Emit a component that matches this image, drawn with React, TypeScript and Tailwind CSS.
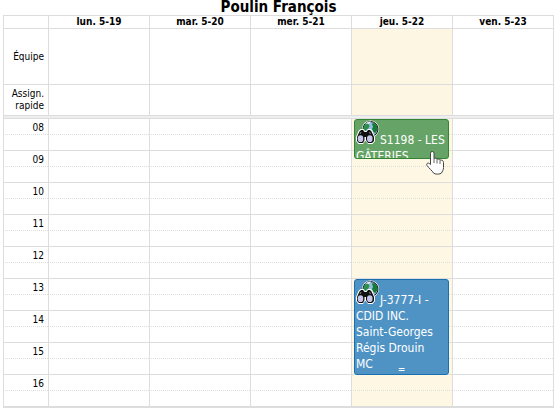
const days = ['lun. 5-19', 'mar. 5-20', 'mer. 5-21', 'jeu. 5-22', 'ven. 5-23']
const hours = ['08', '09', '10', '11', '12', '13', '14', '15', '16']
const today = 3

type CalendarEvent = {
  day: number
  hour: string
  lines: string[]
  className: string
  resizable?: boolean
}

const events: CalendarEvent[] = [
  {
    day: 3,
    hour: '08',
    lines: ['S1198 - LES', 'GÂTERIES'],
    className: 'h-10 border-[#338533] bg-[#66a366]',
  },
  {
    day: 3,
    hour: '13',
    lines: ['J-3777-I -', 'CDID INC.', 'Saint-Georges', 'Régis Drouin', 'MC'],
    className: 'h-24 border-[#1a6fb0] bg-[#4f93c5]',
    resizable: true,
  },
]

function LocateIcon() {
  return (
    <svg viewBox="0 0 24 24" className="inline-block h-6 w-6 align-baseline" aria-hidden="true">
      <circle cx="14.500" cy="9" r="8.500" fill="#fff" />
      <circle cx="14.500" cy="9" r="7.500" fill="#8fbbdc" stroke="#111" strokeWidth="1" />
      <path d="M9 4c2-2 4-2.500 6-2.500l-2 2.500-3 1z" fill="#dcebf4" />
      <path d="M7.500 8c.3-2 1.500-3.500 3-4.500l2 .5 1 2-1.500 3-2 1-1 2z" fill="#2c8f4a" />
      <path d="M16 3.500l2.500-.5 2.500 3 .5 3.500-2 3.500-2-1-1.500-3 1-2z" fill="#157a33" />
      <path d="M13 13l3-1 2 2-2 2h-2z" fill="#2c6ea6" />
      <path d="M2.500 11l2-2h3L9 11h1.500L12 9h3l1.500 2L19 17v4l-2.500 3h-4.500l-2-3h-1l-2 3H2.500L0 21v-4z" fill="#fff" />
      <path d="M3.500 11.500l1.500-1.500h2l1.500 2h2l1.500-2h2l1.500 1.500L18 17v4l-2 2h-4l-2-3v-3H8.500v3L7 23H3l-2-2v-4z" fill="#111" />
      <ellipse cx="4.500" cy="18.700" rx="2.800" ry="3.400" fill="#c6c6ea" />
      <ellipse cx="13.800" cy="18.700" rx="2.800" ry="3.400" fill="#c6c6ea" />
      <path d="M5 12l-1 2M13.500 12l1 2" stroke="#888" fill="none" />
    </svg>
  )
}

function HandCursor() {
  return (
    <svg viewBox="0 0 18 24" className="pointer-events-none absolute top-8 right-2 z-20 h-6 w-[18px]" aria-hidden="true">
      <path
        d="M4.500 2.200a1.500 1.500 0 0 1 3.500 0V7.500c1.300-.7 2.500-.3 2.900.7 1.200-.5 2.500-.1 2.900.9 1.800-.4 3.700.3 3.700 2.400v5c0 3-1.500 4-2 5.500-1 1.500-7 1.500-8 0-1.500-2.500-4.300-4.500-6.500-7.500-1-2 1-3.500 3.500-1z"
        fill="#fff"
        stroke="#444"
      />
      <path d="M8 7.500v4.500M11 8.500v4M14 9.500v3.500" stroke="#666" fill="none" />
    </svg>
  )
}

function EventBox({ event }: { event: CalendarEvent }) {
  return (
    <a
      href="#"
      className={`absolute top-0 right-[3px] left-[2px] z-10 overflow-hidden rounded-[3px] border pl-px text-xs leading-4 text-white ${event.className}`}
    >
      {event.lines.map((line, i) => (
        <div key={line} className="whitespace-nowrap">
          {i === 0 ? <LocateIcon /> : null}
          {line}
        </div>
      ))}
      {event.resizable ? (
        <span className="absolute bottom-0 left-1/2 w-2 -translate-x-1/2 text-center text-[10px] leading-2">=</span>
      ) : null}
    </a>
  )
}

export default function App() {
  return (
    <main className="pr-1 pl-[3px] font-['DejaVu_Sans_Condensed','DejaVu_Sans',sans-serif] text-[10px] text-black">
      <h1 className="h-[15px] text-center text-[15px] leading-[15px] font-bold">Poulin François</h1>

      <table className="w-full table-fixed border-separate border-spacing-0 border-r border-[#ddd]">
        <colgroup>
          <col className="w-[45px]" />
          {days.map((day) => (
            <col key={day} />
          ))}
        </colgroup>
        <thead>
          <tr className="h-[13px]">
            <td className="border-t border-l border-[#ddd] p-0" />
            {days.map((day) => (
              <th key={day} className="border-t border-l border-[#ddd] p-0 leading-3 font-bold">
                {day}
              </th>
            ))}
          </tr>
        </thead>
        <tbody>
          <tr className="h-14">
            <th className="border-t border-l border-[#ddd] py-0 pr-1 pl-0 text-right leading-3 font-normal">Équipe</th>
            {days.map((day, i) => (
              <td key={day} className={`border-t border-l border-[#ddd] p-0 ${i === today ? 'bg-[#fdf6e3]' : ''}`} />
            ))}
          </tr>
          <tr className="h-[31px]">
            <th className="border-t border-l border-[#ddd] py-0 pr-1 pl-0 text-right leading-3 font-normal">
              Assign. rapide
            </th>
            {days.map((day, i) => (
              <td key={day} className={`border-t border-l border-[#ddd] p-0 ${i === today ? 'bg-[#fdf6e3]' : ''}`} />
            ))}
          </tr>
        </tbody>
      </table>

      <div className="h-[3px] border border-b-0 border-[#ddd] bg-[#eee]" />

      <table className="w-full table-fixed border-separate border-spacing-0 border-r border-b-2 border-[#ddd]">
        <colgroup>
          <col className="w-[45px]" />
          {days.map((day) => (
            <col key={day} />
          ))}
        </colgroup>
        {hours.map((hour) => (
          <tbody key={hour}>
            <tr className="h-4">
              <th className="border-t border-l border-[#ddd] pt-[3px] pr-1 pb-0 pl-0 text-right leading-3 font-normal">
                {hour}
              </th>
              {days.map((day, i) => (
                <td
                  key={day}
                  className={`relative border-t border-l border-[#ddd] p-0 ${i === today ? 'bg-[#fdf7e3]' : ''}`}
                >
                  {events
                    .filter((event) => event.day === i && event.hour === hour)
                    .map((event) => (
                      <EventBox key={event.hour} event={event} />
                    ))}
                  {i === today && hour === '08' ? <HandCursor /> : null}
                </td>
              ))}
            </tr>
            <tr className="h-4">
              <td className="border-t border-l border-[#ddd] p-0 [border-top-style:dotted]" />
              {days.map((day, i) => (
                <td
                  key={day}
                  className={`border-t border-l border-[#ddd] p-0 [border-top-style:dotted] ${i === today ? 'bg-[#fdf7e3]' : ''}`}
                />
              ))}
            </tr>
          </tbody>
        ))}
      </table>
    </main>
  )
}
